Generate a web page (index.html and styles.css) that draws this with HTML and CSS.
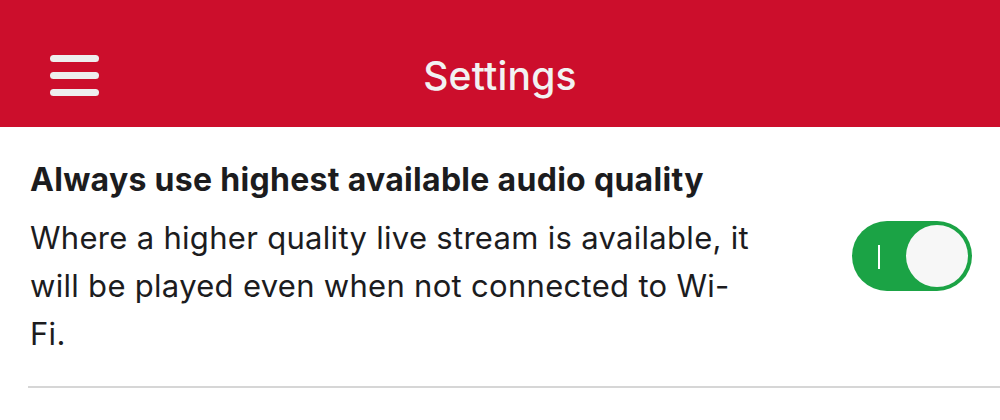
FILE: index.html
```html
<!DOCTYPE html>
<html>
	<head>
		<meta charset="UTF-8">
		<title>Settings</title>
		<link rel="stylesheet" href="styles.css">
	</head>
	<body>
		<div class="header">
			<div class="menu">
				<span></span>
				<span></span>
				<span></span>
			</div>
			<h1>Settings</h1>
		</div>
		<div class="row">
			<div class="text">
				<h3>Always use highest available audio quality</h3>
				<p>Where a higher quality live stream is available, it will be played even when not connected to Wi-Fi.</p>
			</div>
			<div class="toggle">
				<span class="mark"></span>
				<span class="knob"></span>
			</div>
		</div>
	</body>
</html>
```

FILE: styles.css
```css
body{
	margin: 0;
	font-family: Inter, "Noto Sans", sans-serif;
	background: #fff;
	color: #1c1c1e;
}
.header{
	height: 127px;
	box-sizing: border-box;
	padding-top: 24px;
	background: #cc0e2c;
	display: flex;
	align-items: center;
	justify-content: center;
	position: relative;
}
.header h1{
	margin: 0;
	font-size: 39px;
	font-weight: 500;
	color: #f2f2f2;
	letter-spacing: 0.2px;
}
.menu{
	position: absolute;
	left: 50px;
	top: 55px;
	width: 49px;
	display: flex;
	flex-direction: column;
	gap: 10px;
}
.menu span{
	height: 7px;
	border-radius: 4px;
	background: #eeeeee;
}
.row{
	margin-left: 28px;
	border-bottom: 2px solid #d6d6d6;
	display: flex;
	justify-content: space-between;
	padding: 33px 28px 28px 2px;
}
.text{
	width: 728px;
}
.text h3{
	margin: 0 0 14px;
	font-size: 32px;
	font-weight: 700;
	line-height: 40px;
	letter-spacing: 0.3px;
	white-space: nowrap;
}
.text p{
	margin: 0;
	font-size: 31px;
	line-height: 48px;
	letter-spacing: 0.3px;
}
.toggle{
	width: 120px;
	height: 70px;
	border-radius: 35px;
	background: #1ba345;
	position: relative;
	flex-shrink: 0;
	margin-top: 61px;
}
.mark{
	position: absolute;
	left: 26px;
	top: 24px;
	width: 2px;
	height: 24px;
	background: #fff;
}
.knob{
	position: absolute;
	right: 4px;
	top: 4px;
	width: 62px;
	height: 62px;
	border-radius: 50%;
	background: #f7f7f7;
}
```
